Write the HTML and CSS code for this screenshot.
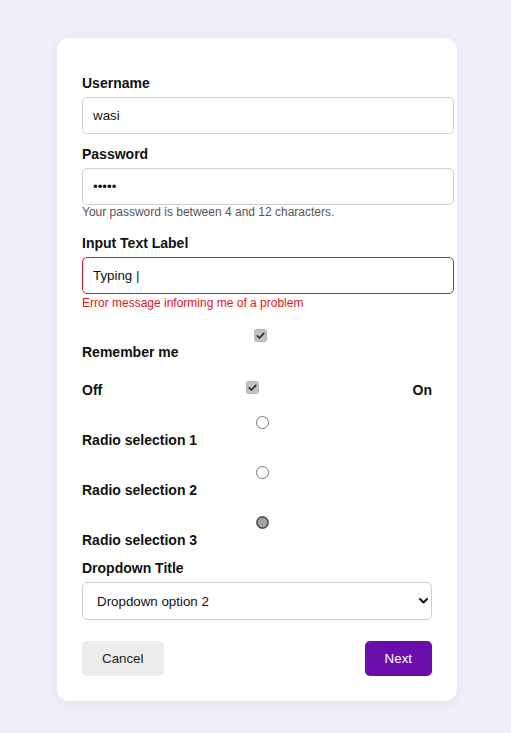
FILE: index.html
```html
<!DOCTYPE html>
<html lang="en">
<head>
<meta charset="utf-8">
<title>Form</title>
<link rel="stylesheet" href="styles.css">
</head>
<body>
<div class="page">
  <form class="card">
    <label class="label" for="username">Username</label>
    <input class="field" id="username" type="text" value="wasi">

    <label class="label gap-top" for="password">Password</label>
    <input class="field" id="password" type="password" value="abcde">
    <p class="hint">Your password is between 4 and 12 characters.</p>

    <label class="label gap-top-lg" for="typing">Input Text Label</label>
    <input class="field field-error" id="typing" type="text" value="Typing |">
    <p class="error">Error message informing me of a problem</p>

    <div class="choice remember">
      <span class="control ctl-check">
        <svg width="13" height="13" viewBox="0 0 13 13"><rect x="0.5" y="0.5" width="12" height="12" rx="2" fill="#c2c2c2" stroke="#b4b4b4"/><path d="M3.3 6.9 L5.4 9 L9.8 4.3" fill="none" stroke="#2b2b2b" stroke-width="1.7" stroke-linecap="round" stroke-linejoin="round"/></svg>
      </span>
      <span class="choice-label">Remember me</span>
    </div>

    <div class="toggle-row">
      <span class="toggle-text off">Off</span>
      <span class="toggle-box">
        <svg width="13" height="13" viewBox="0 0 13 13"><rect x="0.5" y="0.5" width="12" height="12" rx="2" fill="#c2c2c2" stroke="#b4b4b4"/><path d="M3.3 6.9 L5.4 9 L9.8 4.3" fill="none" stroke="#2b2b2b" stroke-width="1.7" stroke-linecap="round" stroke-linejoin="round"/></svg>
      </span>
      <span class="toggle-text on">On</span>
    </div>

    <div class="choice radio first-radio">
      <span class="control ctl-radio">
        <svg width="13" height="13" viewBox="0 0 13 13"><circle cx="6.5" cy="6.5" r="6" fill="#fff" stroke="#767676"/></svg>
      </span>
      <span class="choice-label">Radio selection 1</span>
    </div>
    <div class="choice radio">
      <span class="control ctl-radio">
        <svg width="13" height="13" viewBox="0 0 13 13"><circle cx="6.5" cy="6.5" r="6" fill="#fff" stroke="#767676"/></svg>
      </span>
      <span class="choice-label">Radio selection 2</span>
    </div>
    <div class="choice radio">
      <span class="control ctl-radio">
        <svg width="13" height="13" viewBox="0 0 13 13"><circle cx="6.5" cy="6.5" r="5.6" fill="#a3a3a3" stroke="#4f4f4f" stroke-width="1.6"/></svg>
      </span>
      <span class="choice-label">Radio selection 3</span>
    </div>

    <label class="label dropdown-label" for="dropdown">Dropdown Title</label>
    <div class="select-wrap">
      <select class="select" id="dropdown">
        <option>Dropdown option 1</option>
        <option selected>Dropdown option 2</option>
        <option>Dropdown option 3</option>
      </select>
      <svg class="chevron" width="9" height="6" viewBox="0 0 9 6"><path d="M1 1 L4.5 4.5 L8 1" fill="none" stroke="#111" stroke-width="2" stroke-linecap="round" stroke-linejoin="round"/></svg>
    </div>

    <div class="actions">
      <button type="button" class="btn btn-cancel">Cancel</button>
      <button type="button" class="btn btn-next">Next</button>
    </div>
  </form>
</div>
</body>
</html>
```

FILE: styles.css
```css
* {
  box-sizing: border-box;
}

html, body {
  margin: 0;
  padding: 0;
}

body {
  background: #f1eefa;
  font-family: "Liberation Sans", Arial, sans-serif;
  color: #111;
  min-height: 733px;
}

.page {
  padding: 38px 0 0 3px;
}

.card {
  width: 400px;
  margin: 0 auto;
  background: #fff;
  border-radius: 12px;
  padding: 37px 25px 25px;
  box-shadow: 0 2px 10px rgba(60, 40, 120, 0.08);
  display: flex;
  flex-direction: column;
}

.label {
  display: block;
  font-size: 14px;
  font-weight: bold;
  line-height: 16px;
  margin-bottom: 6px;
  color: #111;
}

.gap-top {
  margin-top: 12px;
}

.gap-top-lg {
  margin-top: 16px;
}

.field {
  box-sizing: content-box;
  width: 100%;
  padding: 10px;
  border: 1px solid #cfcfcf;
  border-radius: 5px;
  font-family: "Liberation Sans", Arial, sans-serif;
  font-size: 13.333px;
  line-height: 15px;
  height: 15px;
  color: #111;
  background: #fff;
  margin: 0;
  outline: none;
}

.field-error {
  border-color: #d81c24;
}

.hint {
  margin: 0;
  font-size: 12px;
  line-height: 14px;
  color: #555;
}

.error {
  margin: 2px 0 0;
  font-size: 12px;
  line-height: 14px;
  color: #e0161e;
}

.choice {
  display: flex;
  flex-direction: column;
}

.control {
  display: flex;
  justify-content: center;
  height: 13px;
}

.control svg {
  display: block;
}

.ctl-check svg {
  margin-left: 7px;
}

.ctl-radio svg {
  margin-left: 11px;
}

.remember {
  margin-top: 19px;
}

.choice-label {
  font-size: 14px;
  font-weight: bold;
  line-height: 16px;
}

.remember .choice-label {
  margin-top: 2px;
}

.radio .choice-label {
  margin-top: 3px;
}

.toggle-row {
  margin-top: 21px;
  display: grid;
  grid-template-columns: 1fr auto 1fr;
  align-items: start;
}

.toggle-box {
  margin-right: 9px;
  height: 13px;
}

.toggle-box svg {
  display: block;
}

.toggle-text {
  font-size: 14px;
  font-weight: bold;
  line-height: 16px;
  margin-top: 1px;
}

.toggle-text.on {
  text-align: right;
}

.first-radio {
  margin-top: 18px;
}

.radio + .radio {
  margin-top: 18px;
}

.dropdown-label {
  margin-top: 12px;
}

.select-wrap {
  position: relative;
}

.select {
  -webkit-appearance: none;
  appearance: none;
  display: block;
  width: 100%;
  height: 38px;
  padding: 0 30px 0 14px;
  border: 1px solid #cfcfcf;
  border-radius: 5px;
  background: #fff;
  font-family: "Liberation Sans", Arial, sans-serif;
  font-size: 13.333px;
  color: #111;
  margin: 0;
  outline: none;
}

.chevron {
  position: absolute;
  right: 4px;
  top: 16px;
  pointer-events: none;
}

.actions {
  margin-top: 21px;
  display: flex;
  justify-content: space-between;
}

.btn {
  border: none;
  border-radius: 5px;
  padding: 10px 20px;
  font-family: "Liberation Sans", Arial, sans-serif;
  font-size: 13.333px;
  line-height: 15px;
  cursor: pointer;
}

.btn-cancel {
  background: #ececec;
  color: #222;
}

.btn-next {
  background: #6a0dad;
  color: #fff;
}
```
